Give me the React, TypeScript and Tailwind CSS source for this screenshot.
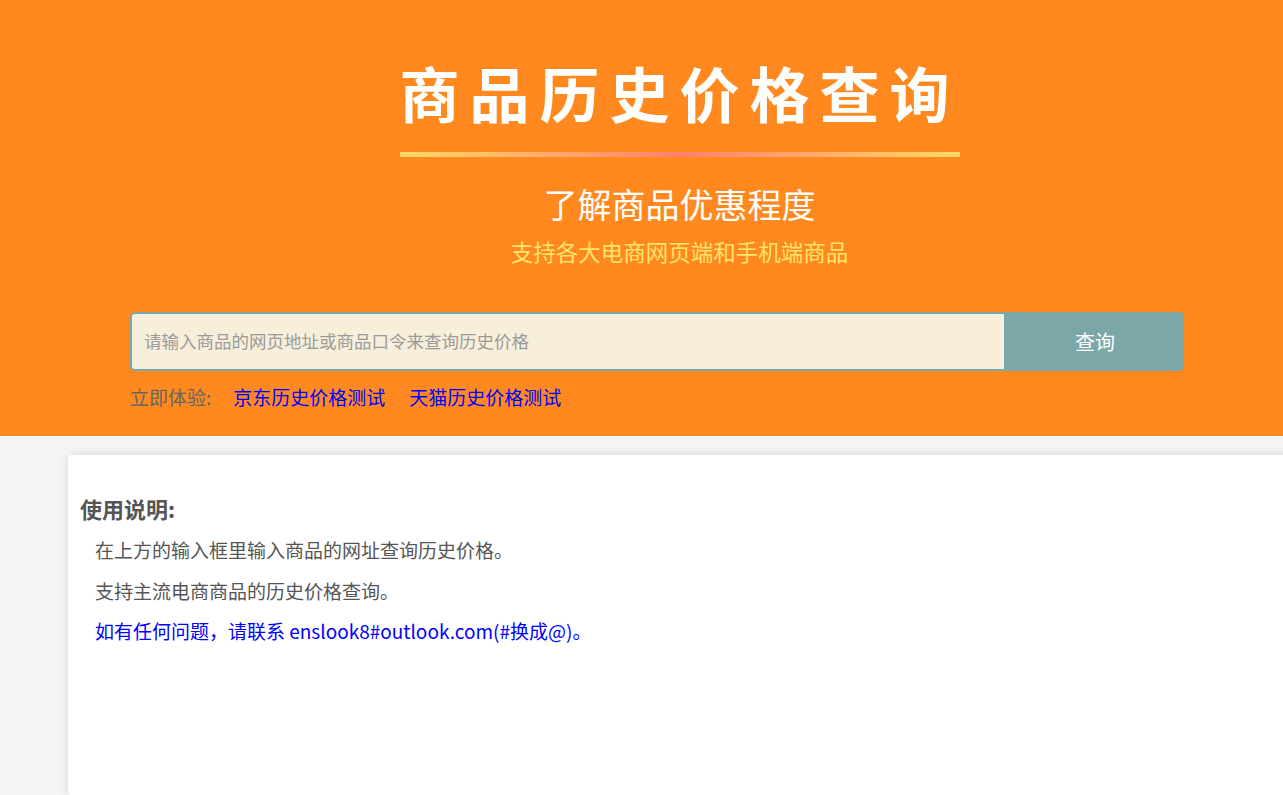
export default function App() {
  const font = "font-['Microsoft_YaHei','Noto_Sans_CJK_SC','Noto_Sans',sans-serif]";
  return (
    <div className={`min-h-screen w-full overflow-hidden bg-[#f5f5f5] ${font}`}>
      {/* header */}
      <header className="bg-[#ff891f] h-[436px] flex flex-col items-center pl-[76px]">
        <h1 className="mt-[52px] text-[60px] leading-[80px] font-bold text-white tracking-[10px]">
          商品历史价格查询
        </h1>
        <div className="mt-[20px] h-[5px] w-[560px] bg-gradient-to-r from-[#ffd966] via-[#ff7f6e] to-[#ffd966]" />
        <h2 className="mt-[22px] text-[34px] leading-[50px] text-white">了解商品优惠程度</h2>
        <p className="mt-[7px] text-[22.5px] leading-[30px] text-[#ffe36b]">支持各大电商网页端和手机端商品</p>

        <div className="mt-[46px] w-[1054px] ml-[-45px]">
          <div className="flex h-[59px]">
            <input
              type="text"
              placeholder="请输入商品的网页地址或商品口令来查询历史价格"
              className="flex-1 bg-[#f7efd9] border-2 border-[#7aa7a8] rounded-l-[5px] px-[12px] text-[17.5px] text-[#333] placeholder:text-[#9b9b9b] outline-none"
            />
            <button className="w-[178px] bg-[#7ba7a8] text-white text-[20px] rounded-r-[5px]">查询</button>
          </div>
          <div className="mt-[13px] flex items-center text-[19px] leading-[26px]">
            <span className="text-[#666]">立即体验:</span>
            <a href="#" className="ml-[22px] text-[#0000ff]">京东历史价格测试</a>
            <a href="#" className="ml-[24px] text-[#0000ff]">天猫历史价格测试</a>
          </div>
        </div>
      </header>

      {/* body */}
      <main className="pt-[19px] pl-[68px]">
        <div className="w-[1260px] min-h-[340px] bg-white rounded-l-[3px] shadow-[0_0_12px_rgba(0,0,0,0.12)] pl-[12px] pt-[37px]">
          <h3 className="text-[22px] leading-[32px] font-bold text-[#555]">使用说明:</h3>
          <div className="pl-[15px] mt-[13px] text-[19px] leading-[26px] space-y-[14.5px]">
            <p className="text-[#555]">在上方的输入框里输入商品的网址查询历史价格。</p>
            <p className="text-[#555]">支持主流电商商品的历史价格查询。</p>
            <p className="text-[#0000ff]">如有任何问题，请联系 enslook8#outlook.com(#换成@)。</p>
          </div>
        </div>
      </main>
    </div>
  );
}
